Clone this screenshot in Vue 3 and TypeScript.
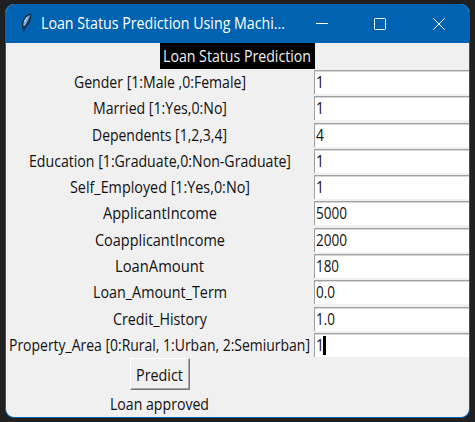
<script setup lang="ts">
import { ref } from 'vue'

interface Field {
  label: string
  width: number
  value: string
  valueWidth: number
}

const fields = ref<Field[]>([
  { label: 'Gender [1:Male ,0:Female]', width: 172, value: '1', valueWidth: 8 },
  { label: 'Married [1:Yes,0:No]', width: 134, value: '1', valueWidth: 8 },
  { label: 'Dependents [1,2,3,4]', width: 135, value: '4', valueWidth: 8 },
  { label: 'Education [1:Graduate,0:Non-Graduate]', width: 262, value: '1', valueWidth: 8 },
  { label: 'Self_Employed [1:Yes,0:No]', width: 180, value: '1', valueWidth: 8 },
  { label: 'ApplicantIncome', width: 114, value: '5000', valueWidth: 31 },
  { label: 'CoapplicantIncome', width: 130, value: '2000', valueWidth: 31 },
  { label: 'LoanAmount', width: 89, value: '180', valueWidth: 23 },
  { label: 'Loan_Amount_Term', width: 134, value: '0.0', valueWidth: 19 },
  { label: 'Credit_History', width: 94, value: '1.0', valueWidth: 19 },
  { label: 'Property_Area [0:Rural, 1:Urban, 2:Semiurban]', width: 301, value: '1', valueWidth: 8 },
])
const focused = 10
</script>

<template>
  <div class="desktop">
    <main class="window">
      <header class="titlebar">
        <svg class="feather" width="14" height="22" viewBox="0 0 14 22">
          <path d="M4 19 C3 15 2 11 5 6 C7 3 10 1 12 2 C13 6 11 11 8 14 L5 16 Z" fill="#142c45" />
          <path d="M4.5 14 C3.5 9 7 5 11 3 C11 7 9 10.5 6 14 Z" fill="#78aee4" />
          <path d="M11 5 C9.5 8 7.5 12 4.5 19.5" fill="none" stroke="#0a1524" stroke-width="0.8" />
          <path d="M8 5 L5.5 9.5" stroke="#d0e4f5" stroke-width="1" />
        </svg>
        <svg class="title" width="245" height="24">
          <text x="0" y="17" textLength="244" lengthAdjust="spacingAndGlyphs">Loan Status Prediction Using Machi...</text>
        </svg>
        <svg class="controls" width="130" height="14" viewBox="0 0 130 14">
          <path d="M0 6.5 H12" />
          <rect x="58.5" y="1.5" width="11" height="11" rx="1" />
          <path d="M117.3 1.3 L128.7 12.7 M128.7 1.3 L117.3 12.7" />
        </svg>
      </header>

      <div class="heading">
        <svg width="149" height="22">
          <text x="0" y="16" textLength="148" lengthAdjust="spacingAndGlyphs">Loan Status Prediction</text>
        </svg>
      </div>

      <div v-for="(f, i) in fields" :key="f.label" class="row">
        <div class="label">
          <svg :width="f.width" height="22">
            <text x="0" y="16" :textLength="f.width" lengthAdjust="spacingAndGlyphs">{{ f.label }}</text>
          </svg>
        </div>
        <div class="entry">
          <svg :width="f.valueWidth" height="20">
            <text x="0" y="15" :textLength="f.valueWidth" lengthAdjust="spacingAndGlyphs">{{ f.value }}</text>
          </svg>
          <span v-if="i === focused" class="caret"></span>
        </div>
      </div>

      <div class="action">
        <button class="predict" type="button">
          <svg width="48" height="22">
            <text x="0" y="16" textLength="47" lengthAdjust="spacingAndGlyphs">Predict</text>
          </svg>
        </button>
      </div>
      <div class="result">
        <svg width="100" height="22">
          <text x="0" y="16" textLength="99" lengthAdjust="spacingAndGlyphs">Loan approved</text>
        </svg>
      </div>
    </main>
  </div>
</template>

<style>
body {
  background: #202020;
}
</style>

<style scoped>
.desktop {
  box-sizing: border-box;
  width: 475px;
  height: 422px;
  padding: 4px 5px 0;
  background: #202020;
  font-family: 'Open Sans', 'Noto Sans', sans-serif;
  font-size: 15.4px;
}
.window {
  box-sizing: border-box;
  width: 465px;
  height: 414px;
  border: 1px solid #0063b1;
  border-top: 0;
  border-radius: 9px;
  background: #f0f0f0;
  overflow: hidden;
}
svg {
  display: block;
  flex: none;
  overflow: visible;
}
text {
  fill: #111;
}
.titlebar {
  display: flex;
  align-items: flex-start;
  height: 39px;
  background: #0063b1;
}
.feather {
  margin: 8px 0 0 13px;
}
.title {
  margin: 8px 0 0 8px;
}
.title text {
  fill: #fff;
}
.controls {
  margin: 13px 0 0 30px;
  fill: none;
  stroke: #fff;
  stroke-width: 1;
}
.heading {
  box-sizing: border-box;
  width: 155px;
  height: 26px;
  margin: 0 0 1px 154px;
  padding: 3px 3px 0;
  background: #000;
}
.heading text {
  fill: #f0f0f0;
}
.row {
  display: flex;
  height: 26.3px;
}
.label {
  display: flex;
  justify-content: center;
  width: 307px;
  margin-right: 1px;
  padding-top: 2px;
}
.entry {
  display: flex;
  box-sizing: border-box;
  width: 155px;
  height: 24px;
  padding: 2px 0 0 1px;
  background: #fff;
  border-top: 1px solid #a0a0a0;
  border-left: 1px solid #a0a0a0;
  box-shadow: inset 0 1px #d8d8d8;
}
.caret {
  width: 3px;
  height: 19px;
  margin-left: -1px;
  background: #000;
}
.action {
  margin-top: -1px;
  padding: 0 0 0 124px;
}
.predict {
  display: block;
  box-sizing: border-box;
  width: 60px;
  height: 32px;
  padding: 4px 0 0 5px;
  border: 1px solid;
  border-color: #fff #777 #777 #fff;
  border-radius: 0;
  background: #f0f0f0;
  box-shadow: inset -1px -1px #a6a6a6;
  font: inherit;
}
.result {
  padding: 4px 0 0 104px;
}
</style>
